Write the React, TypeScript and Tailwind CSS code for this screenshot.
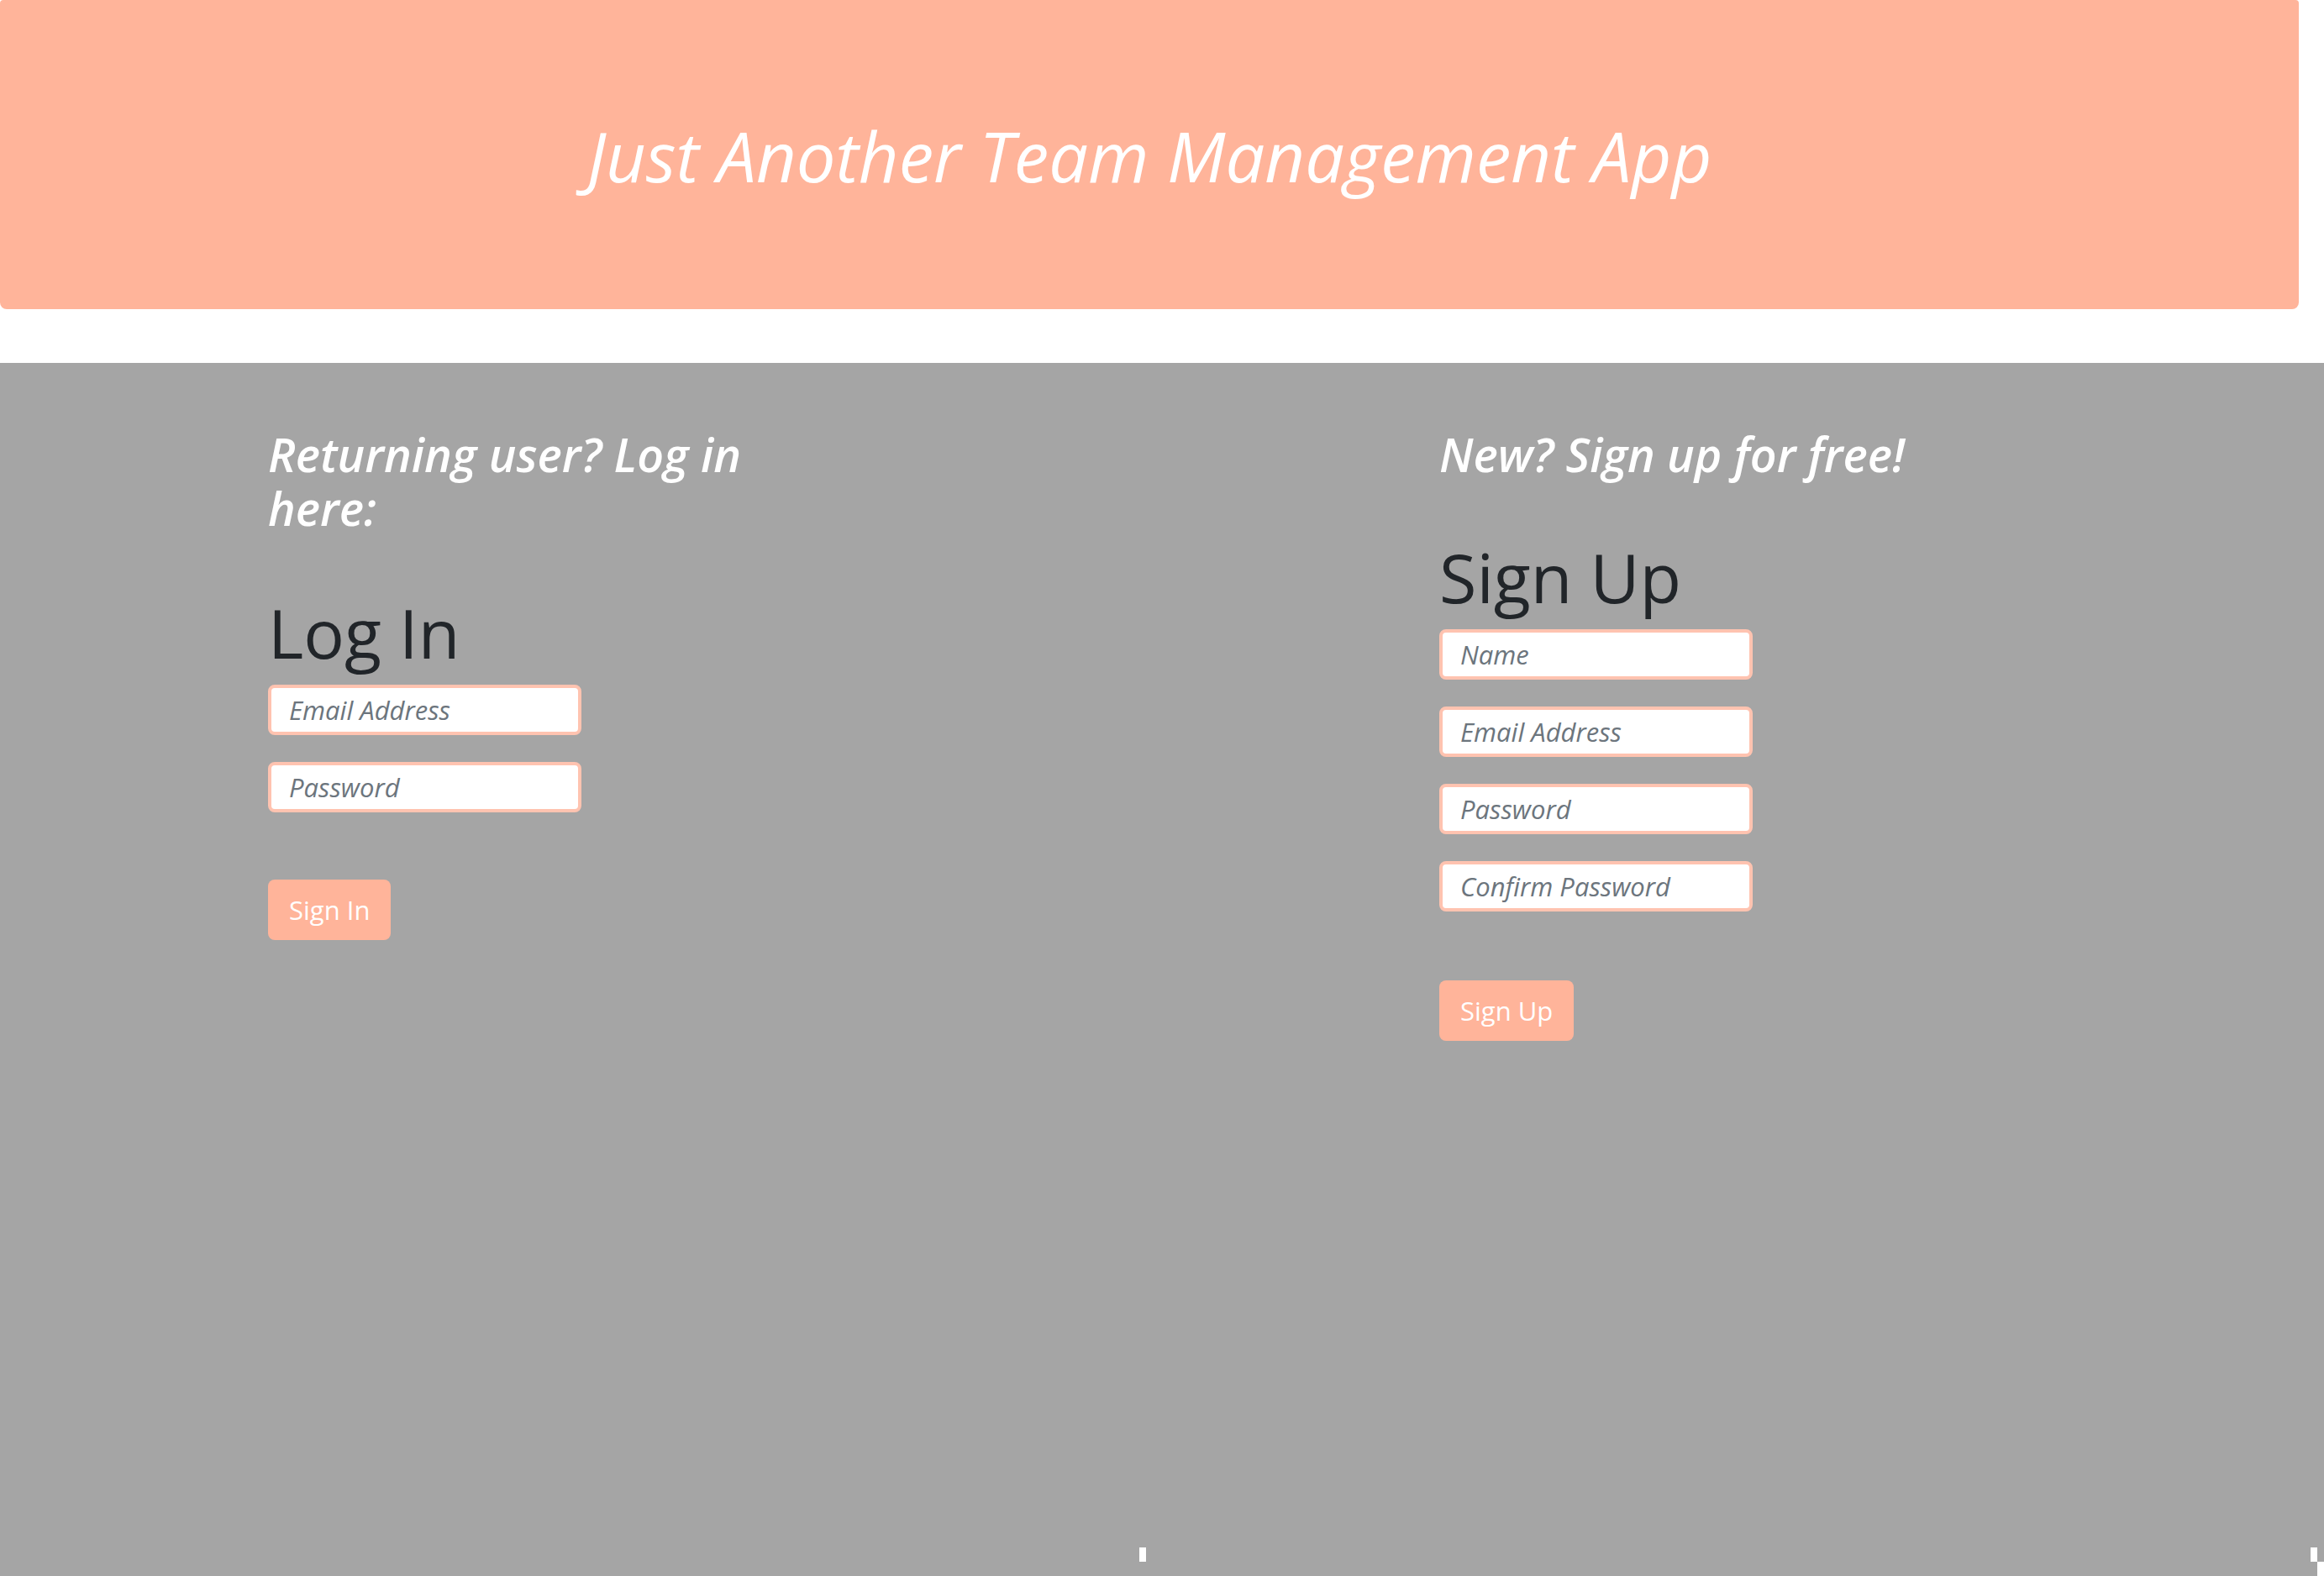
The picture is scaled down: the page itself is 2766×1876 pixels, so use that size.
import React, { useState } from "react";

const font = "font-['Open_Sans','Noto_Sans',sans-serif]";

function Field({ placeholder, type = "text" }: { placeholder: string; type?: string }) {
  const [value, setValue] = useState("");
  return (
    <input
      type={type}
      placeholder={placeholder}
      value={value}
      onChange={(e) => setValue(e.target.value)}
      className="block h-[60px] w-[373px] rounded-[8px] border-[4px] border-[#ffc3b0] bg-white pl-[21px] text-[31px] italic text-[#495057] placeholder:text-[#6c757d] outline-none"
    />
  );
}

export default function App() {
  return (
    <div className={`relative min-h-screen bg-white ${font}`}>
      {/* Banner */}
      <header className="mr-[30px] flex h-[368px] items-center justify-center rounded-t-[4px] rounded-b-[8px] bg-[#ffb49a]">
        <h1 className="text-[83px] font-normal italic leading-none text-white">
          Just Another Team Management App
        </h1>
      </header>

      {/* Forms */}
      <main className="mt-[64px] flex min-h-[1444px] bg-[#a5a5a5] pl-[319px] pt-[77px]">
        <section className="w-[600px]">
          <h3 className="text-[55.5px] font-semibold italic leading-[64px] text-white">
            Returning user? Log in here:
          </h3>
          <h2 className="mt-[68px] text-[81px] leading-[96px] text-[#212529]">Log In</h2>
          <form className="mt-[14px] flex flex-col gap-[32px]" onSubmit={(e) => e.preventDefault()}>
            <Field placeholder="Email Address" type="email" />
            <Field placeholder="Password" type="password" />
            <div className="mt-[48px]">
              <button className="h-[72px] rounded-[8px] bg-[#ffb49a] px-[25px] text-[31px] text-white">
                Sign In
              </button>
            </div>
          </form>
        </section>

        <section className="ml-[794px] w-[600px]">
          <h3 className="text-[55.5px] font-semibold italic leading-[64px] text-white">
            New? Sign up for free!
          </h3>
          <h2 className="mt-[66px] text-[81px] leading-[96px] text-[#212529]">Sign Up</h2>
          <form className="mt-[14px] flex flex-col gap-[32px]" onSubmit={(e) => e.preventDefault()}>
            <Field placeholder="Name" />
            <Field placeholder="Email Address" type="email" />
            <Field placeholder="Password" type="password" />
            <Field placeholder="Confirm Password" type="password" />
            <div className="mt-[50px]">
              <button className="h-[72px] rounded-[8px] bg-[#ffb49a] px-[25px] text-[31px] text-white">
                Sign Up
              </button>
            </div>
          </form>
        </section>
      </main>

      {/* small white marks near the bottom edge */}
      <div className="absolute left-[1356px] top-[1842px] h-[17px] w-[8px] bg-white" />
      <div className="absolute left-[2750px] top-[1842px] h-[17px] w-[8px] bg-white" />
      <div className="absolute left-[2758px] top-[1859px] h-[17px] w-[8px] bg-white" />
    </div>
  );
}
